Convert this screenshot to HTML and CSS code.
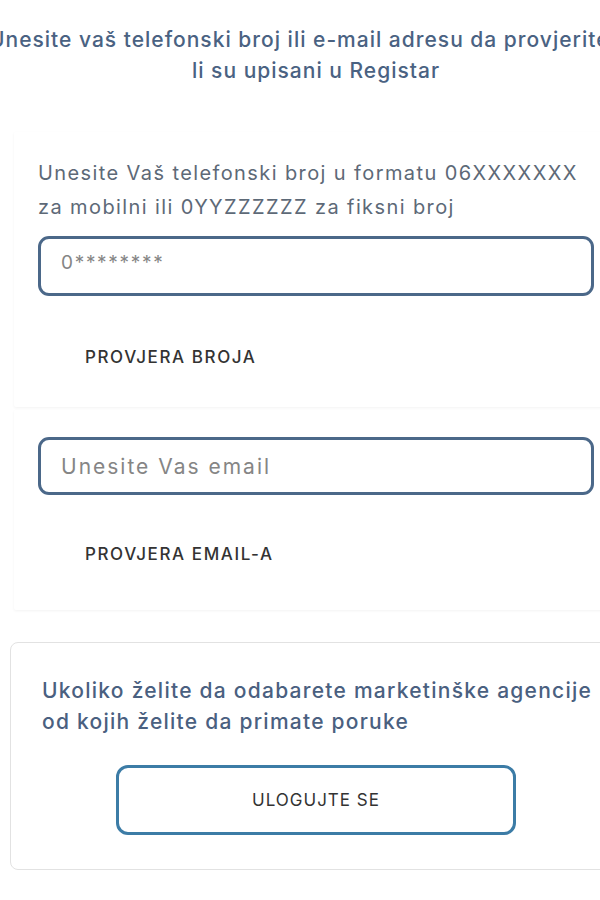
FILE: index.html
```html
<!DOCTYPE html>
<html lang="sr">
<head>
<meta charset="utf-8">
<title>Registar</title>
<link rel="stylesheet" href="styles.css">
</head>
<body>
<main class="page">
  <h1 class="title">Unesite vaš telefonski broj ili e-mail adresu da provjerite da<br>li su upisani u Registar</h1>

  <section class="card card-phone">
    <p class="hint">Unesite Vaš telefonski broj u formatu 06XXXXXXX<br>za mobilni ili 0YYZZZZZZ za fiksni broj</p>
    <input class="field field-phone" type="text" placeholder="0********">
    <button class="link-btn" type="button">PROVJERA BROJA</button>
  </section>

  <section class="card card-email">
    <input class="field field-email" type="email" placeholder="Unesite Vas email">
    <button class="link-btn" type="button">PROVJERA EMAIL-A</button>
  </section>

  <section class="login-card">
    <p class="login-text">Ukoliko želite da odabarete marketinške agencije<br>od kojih želite da primate poruke</p>
    <button class="login-btn" type="button">ULOGUJTE SE</button>
  </section>
</main>
</body>
</html>
```

FILE: styles.css
```css
html, body {
  margin: 0;
  padding: 0;
  background: #ffffff;
  overflow-x: hidden;
}

body {
  font-family: Inter, "Open Sans", sans-serif;
}

.page {
  width: 612px;
  margin-left: 10px;
  padding-top: 24px;
  display: flex;
  flex-direction: column;
}

.title {
  margin: 0 -60px 46px -60px;
  font-size: 21px;
  line-height: 31px;
  font-weight: 500;
  letter-spacing: 1px;
  color: #4a6282;
  text-align: center;
  white-space: nowrap;
}

.card {
  margin: 0 4px;
  background: #fff;
  box-shadow: 0 1px 3px rgba(0, 0, 0, 0.05);
  border-radius: 2px;
  padding: 0 24px;
  display: flex;
  flex-direction: column;
  box-sizing: border-box;
}

.card-phone {
  padding-top: 24px;
  height: 275px;
}

.card-email {
  margin-top: 3px;
  height: 200px;
  padding-top: 27px;
}

.hint {
  margin: 0 0 12px 0;
  font-size: 20px;
  line-height: 34px;
  letter-spacing: 1.4px;
  color: #5d6977;
  font-weight: 400;
  white-space: nowrap;
}

.field {
  box-sizing: border-box;
  border: 3px solid #4b6889;
  border-radius: 11px;
  padding: 0 20px;
  font-family: inherit;
  background: #fff;
  outline: none;
  color: #333;
}

.field-phone {
  height: 60px;
  font-size: 19px;
  letter-spacing: 1.7px;
  padding-bottom: 8px;
}

.field-email {
  height: 58px;
  font-size: 21px;
  letter-spacing: 2px;
}

.field::placeholder {
  color: #858585;
}

.link-btn {
  align-self: flex-start;
  margin: 51px 0 0 47px;
  padding: 0;
  background: none;
  border: none;
  font-family: inherit;
  font-size: 17px;
  font-weight: 500;
  letter-spacing: 1.6px;
  color: #333;
  line-height: 20px;
}

.card-email .link-btn {
  margin-top: 49px;
}

.login-card {
  margin-top: 32px;
  border: 1px solid #e2e2e2;
  border-radius: 8px;
  padding: 32px 0 34px 31px;
  display: flex;
  flex-direction: column;
}

.login-text {
  margin: 0 0 28px 0;
  font-size: 21px;
  line-height: 31px;
  font-weight: 500;
  letter-spacing: 1.25px;
  color: #4a6080;
  white-space: nowrap;
}

.login-btn {
  align-self: center;
  margin-left: -31px;
  width: 400px;
  height: 70px;
  border: 3px solid #3c7ca6;
  border-radius: 12px;
  background: #fff;
  font-family: inherit;
  font-size: 17px;
  font-weight: 400;
  letter-spacing: 1px;
  color: #333;
}
```
